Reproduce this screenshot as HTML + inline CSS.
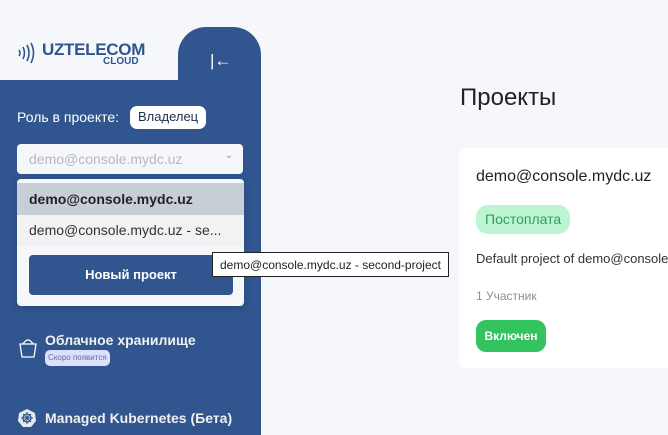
<!DOCTYPE html>
<html><head><meta charset="utf-8"><style>
*{box-sizing:border-box;margin:0;padding:0}
html,body{width:668px;height:435px;overflow:hidden}
body{background:#f5f7fa;font-family:"Liberation Sans","Noto Sans CJK SC",sans-serif;position:relative}
.abs{position:absolute}
.side{left:0;top:80px;width:261px;height:355px;background:#30558f}
.tab{left:178px;top:27px;width:83px;height:80px;background:#30558f;border-radius:28px 28px 0 0}
.logoarea{left:0;top:0;width:178px;height:80px;background:#f5f7fa;border-bottom-right-radius:26px}
</style></head><body>
<div class="abs side"></div>
<div class="abs tab"></div>
<div class="abs logoarea"></div>
<svg class="abs" style="left:17px;top:42px" width="24" height="22" viewBox="0 0 24 22" fill="none" stroke="#30558f" stroke-width="1.6">
<path d="M2 8 Q4 11 2 14"/><path d="M6 5 Q9 11 6 17"/><path d="M10 3 Q14 11 10 19"/><path d="M14 1 Q19 11 14 21"/></svg>
<div class="abs" style="left:42px;top:40px;font-size:17px;font-weight:bold;color:#30558f;letter-spacing:-0.3px">UZTELECOM</div>
<div class="abs" style="left:103px;top:56px;font-size:10px;font-weight:bold;color:#30558f">CLOUD</div>
<div class="abs" style="left:210px;top:52px;color:#fff;font-size:17px;line-height:17px">|←</div>
<div class="abs" style="left:17px;top:109px;color:#fff;font-size:14px">Роль в проекте:</div>
<div class="abs" style="left:130px;top:106px;background:#fff;border-radius:7px;padding:3px 8px;font-size:13px;color:#1f2d4a;height:23px">Владелец</div>
<div class="abs" style="left:17px;top:144px;width:226px;height:30px;background:#f5f7fa;border-radius:4px;font-size:14px;color:#b5b8bd;padding:7px 12px">demo@console.mydc.uz<span style="position:absolute;right:10px;top:6px;font-size:10px;color:#999">⌄</span></div>
<div class="abs" style="left:17px;top:179px;width:227px;height:127px;background:#f5f7fa;border-radius:4px;overflow:hidden;box-shadow:0 2px 8px rgba(0,0,0,.15)">
<div style="margin-top:4px;height:32px;background:#c8ced6;font-size:14px;font-weight:bold;color:#222;padding:8px 12px">demo@console.mydc.uz</div>
<div style="height:31px;background:#f2f2f2;font-size:14px;color:#333;padding:7px 12px">demo@console.mydc.uz - se...</div>
<div style="position:absolute;left:12px;top:76px;width:204px;height:40px;background:#30558f;border-radius:4px;color:#fff;font-weight:bold;font-size:13px;text-align:center;line-height:40px">Новый проект</div>
</div>
<div class="abs" style="left:212px;top:252px;width:237px;height:25px;background:#fff;border:1px solid #222;font-size:12px;color:#222;padding:5px 7px;white-space:nowrap">demo@console.mydc.uz - second-project</div>
<svg class="abs" style="left:19px;top:336px" width="18" height="22" viewBox="0 0 18 22" fill="none" stroke="#fff" stroke-width="1.3"><path d="M4 8 Q9 0 14 8"/><path d="M1 8 H17 L15 21 H3 Z"/></svg>
<div class="abs" style="left:45px;top:332px;color:#f0f0f0;font-size:14px;font-weight:bold">Облачное хранилище</div>
<div class="abs" style="left:45px;top:350px;background:#dde0fb;border-radius:5px;font-size:8px;color:#6a6aa0;padding:3px 3px;height:16px">Скоро появится</div>
<svg class="abs" style="left:17px;top:408px" width="20" height="20" viewBox="0 0 20 20"><polygon points="10,1 18,5 19,13 14,19 6,19 1,13 2,5" fill="#e6e8ee"/><circle cx="10" cy="10" r="4" fill="none" stroke="#30558f" stroke-width="1.3"/><path d="M10 4V16M4 10H16M6 6L14 14M14 6L6 14" stroke="#30558f" stroke-width="1"/></svg>
<div class="abs" style="left:45px;top:410px;color:#f0f0f0;font-size:14px;font-weight:bold">Managed Kubernetes (Бета)</div>
<div class="abs" style="left:460px;top:84px;font-size:24px;color:#222">Проекты</div>
<div class="abs" style="left:459px;top:148px;width:209px;height:220px;background:#fff;border-radius:8px 0 0 8px;overflow:hidden">
<div class="abs" style="left:17px;top:20px;font-size:16px;color:#222;white-space:nowrap">demo@console.mydc.uz</div>
<div class="abs" style="left:17px;top:57px;height:29px;padding:0 9px;background:#bdf5d2;border-radius:12px;color:#2f9e5e;font-size:14px;line-height:29px">Постоплата</div>
<div class="abs" style="left:17px;top:103px;font-size:13px;color:#333;white-space:nowrap">Default project of demo@console.mydc.uz</div>
<div class="abs" style="left:17px;top:141px;font-size:12px;color:#8a8f99">1 Участник</div>
<div class="abs" style="left:17px;top:172px;width:70px;height:32px;background:#34c45f;border-radius:10px;color:#fff;font-weight:bold;font-size:12px;text-align:center;line-height:32px">Включен</div>
</div>
</body></html>
